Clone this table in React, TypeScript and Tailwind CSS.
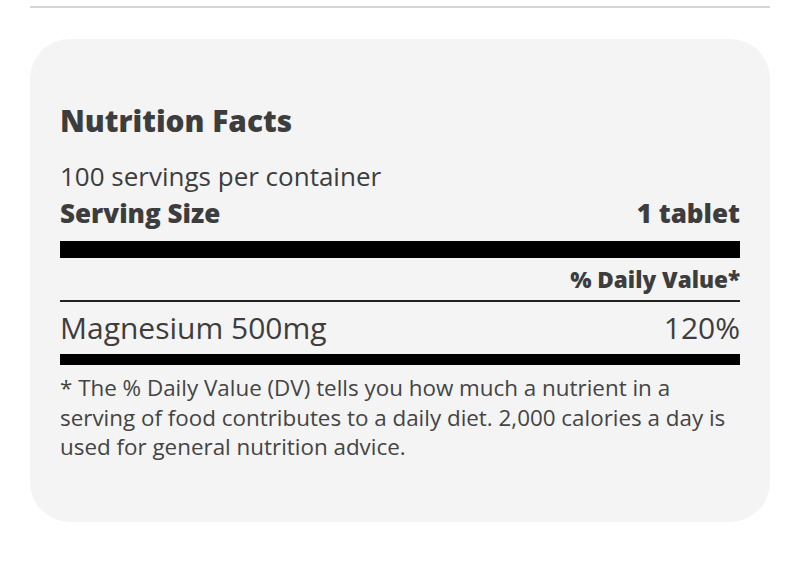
import React from 'react';

export default function App() {
  return (
    <div className="w-[800px] h-[569px] bg-white" style={{ fontFamily: '"Open Sans", sans-serif' }}>
      <div className="px-[30px] pt-[6px]">
        <div className="h-[2px] bg-[#d6d6d6]" />
        <div className="mt-[31px] bg-[#f4f4f4] rounded-[40px] h-[483px] px-[30px] pt-[64px] text-[#3d3d3d]">
          <h2 className="text-[29.8px] font-extrabold leading-[36px]">Nutrition Facts</h2>
          <p className="mt-[21px] text-[26px] leading-[32px]">100 servings per container</p>
          <div className="flex justify-between text-[26px] font-extrabold leading-[32px] mt-[5px]">
            <span>Serving Size</span>
            <span>1 tablet</span>
          </div>
          <div className="mt-[12px] h-[17px] bg-black" />
          <div className="flex justify-end text-[22.5px] font-extrabold leading-[40px] pt-[2px]">% Daily Value*</div>
          <div className="h-[2px] bg-[#222]" />
          <div className="flex justify-between text-[30px] leading-[52px]">
            <span>Magnesium 500mg</span>
            <span>120%</span>
          </div>
          <div className="h-[11px] bg-black" />
          <p className="mt-[8px] w-[678px] text-[22.4px] leading-[29.5px] text-[#444]">
            * The % Daily Value (DV) tells you how much a nutrient in a serving of food contributes to a daily diet. 2,000 calories a day is used for general nutrition advice.
          </p>
        </div>
      </div>
    </div>
  );
}
